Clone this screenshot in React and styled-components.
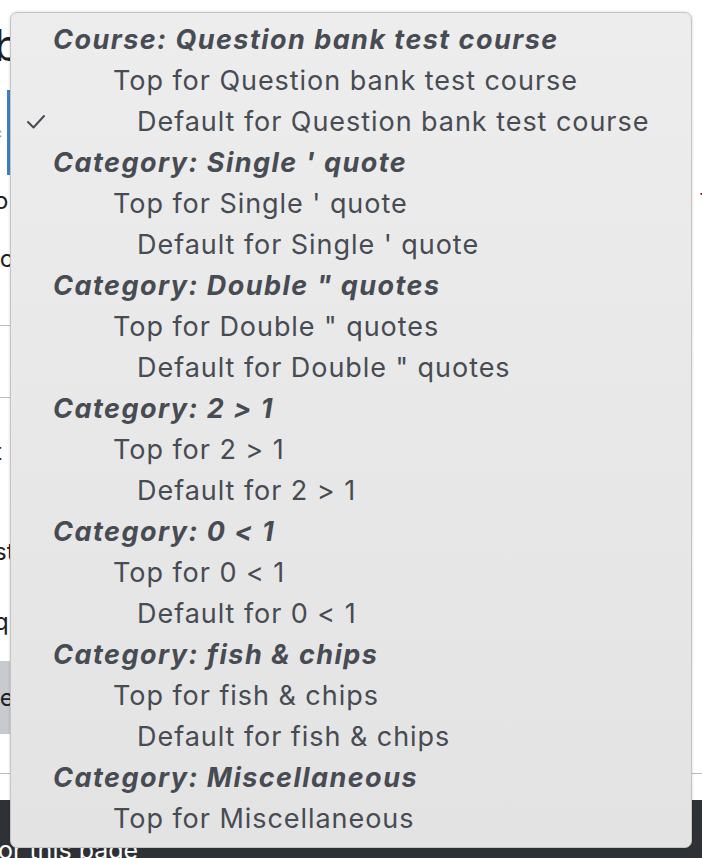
import React from "react";
import styled, { createGlobalStyle } from "styled-components";

const GlobalStyle = createGlobalStyle`
  html, body {
    margin: 0;
    padding: 0;
    background: #fff;
  }
  body {
    font-family: "Inter", "Liberation Sans", sans-serif;
  }
`;

const Page = styled.div`
  position: relative;
  width: 702px;
  height: 858px;
  overflow: hidden;
  background: #fff;
  display: flex;
  flex-direction: column;
  color: #1d2125;
`;

const Content = styled.div`
  flex: 1;
  display: flex;
  flex-direction: column;
  margin-left: -6px;
  font-size: 24px;
`;

const Heading = styled.h2`
  margin: 20px 0 0 0;
  font-size: 44px;
  font-weight: 400;
  line-height: 50px;
`;

const SelectRow = styled.div`
  display: flex;
  align-items: center;
  gap: 5px;
  margin-top: 20px;
  height: 85px;
  color: #888;
  font-size: 14px;
`;

const FocusedSelect = styled.div`
  width: 400px;
  height: 100%;
  border-left: 5px solid #3f80c3;
`;

const Line = styled.div`
  margin-top: ${(p) => p.$top}px;
  line-height: 28px;
`;

const Rule = styled.hr`
  margin: ${(p) => p.$top}px 0 0 0;
  border: 0;
  border-top: 1px solid #b9bcc0;
  width: ${(p) => (p.$full ? "100%" : "300px")};
`;

const GreyButton = styled.div`
  margin-top: 25px;
  height: 73px;
  width: 200px;
  background: #c7cbd0;
  display: flex;
  align-items: center;
`;

const RightNote = styled.div`
  position: absolute;
  top: 184px;
  right: -6px;
  font-size: 24px;
  line-height: 28px;
`;

const Footer = styled.footer`
  height: 58px;
  background: #2e3237;
  color: #fff;
  font-size: 25px;
  display: flex;
  align-items: flex-end;
  margin-left: -2px;
  line-height: 16px;
  overflow: hidden;
`;

const Menu = styled.div`
  position: absolute;
  top: 12px;
  left: 10px;
  width: 682px;
  height: 836px;
  box-sizing: border-box;
  padding: 6px 0;
  border: 1px solid #c4c4c4;
  border-radius: 7px;
  background: linear-gradient(#ededee, #e3e3e4);
  box-shadow: 0 0 3px rgba(0, 0, 0, 0.18);
  font-family: "Inter", "Liberation Sans", sans-serif;
  font-size: 27px;
  color: #474b52;
  overflow: hidden;
`;

const Option = styled.div`
  position: relative;
  height: 41px;
  display: flex;
  align-items: center;
  padding-left: ${(p) => p.$indent}px;
  white-space: nowrap;
  font-weight: ${(p) => (p.$group ? 700 : 400)};
  font-style: ${(p) => (p.$group ? "italic" : "normal")};
  letter-spacing: ${(p) => (p.$group ? "1.45px" : "0.95px")};
`;

const Check = styled.svg`
  position: absolute;
  left: 15px;
  top: 12px;
  width: 20px;
  height: 17px;
`;

const groups = [
  { label: "Course: Question bank test course", name: "Question bank test course", selected: true },
  { label: "Category: Single ' quote", name: "Single ' quote" },
  { label: 'Category: Double " quotes', name: 'Double " quotes' },
  { label: "Category: 2 > 1", name: "2 > 1" },
  { label: "Category: 0 < 1", name: "0 < 1" },
  { label: "Category: fish & chips", name: "fish & chips" },
  { label: "Category: Miscellaneous", name: "Miscellaneous", noDefault: true },
];

function CheckMark() {
  return (
    <Check viewBox="0 0 20 17">
      <polyline
        points="2,9 7.5,14.5 18,3"
        fill="none"
        stroke="#474b52"
        strokeWidth="2"
        strokeLinecap="round"
        strokeLinejoin="round"
      />
    </Check>
  );
}

export default function App() {
  return (
    <>
      <GlobalStyle />
      <Page>
        <Content>
          <Heading>b</Heading>
          <SelectRow>
            <span>c</span>
            <FocusedSelect />
          </SelectRow>
          <Line $top={12}>o</Line>
          <Line $top={30}>ic</Line>
          <Rule $top={52} />
          <Rule $top={71} />
          <Line $top={40}>t</Line>
          <Line $top={72}>st</Line>
          <Line $top={42}>qu</Line>
          <GreyButton>ie</GreyButton>
          <Rule $top={39} $full />
        </Content>
        <RightNote>t</RightNote>
        <Footer>or this page</Footer>

        <Menu>
          {groups.map((g) => (
            <React.Fragment key={g.label}>
              <Option $group $indent={42}>{g.label}</Option>
              <Option $indent={102}>Top for {g.name}</Option>
              {!g.noDefault && (
                <Option $indent={126}>
                  {g.selected && <CheckMark />}
                  Default for {g.name}
                </Option>
              )}
            </React.Fragment>
          ))}
        </Menu>
      </Page>
    </>
  );
}
